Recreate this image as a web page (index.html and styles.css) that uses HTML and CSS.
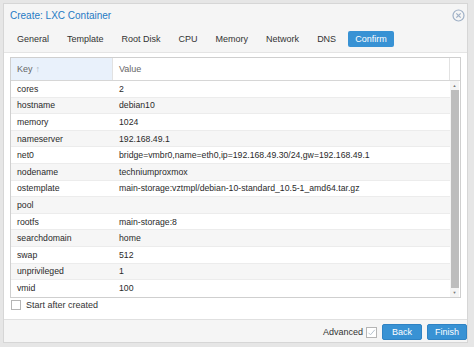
FILE: index.html
```html
<!DOCTYPE html>
<html lang="en">
<head>
    <meta charset="UTF-8">
    <title>Create: LXC Container</title>
    <link rel="stylesheet" href="styles.css">
</head>
<body>

<div class="window">
    <div class="window-header">
        <span class="title">Create: LXC Container</span>
        <svg class="close" width="13" height="13" viewBox="0 0 13 13">
            <circle cx="6.5" cy="6.5" r="5.5" fill="none" stroke="#9fb0c6" stroke-width="1.2"/>
            <path d="M4.3 4.3 L8.7 8.7 M8.7 4.3 L4.3 8.7" stroke="#9fb0c6" stroke-width="1.2"/>
        </svg>
    </div>

    <div class="tabs">
        <span class="tab">General</span>
        <span class="tab">Template</span>
        <span class="tab">Root Disk</span>
        <span class="tab">CPU</span>
        <span class="tab">Memory</span>
        <span class="tab">Network</span>
        <span class="tab">DNS</span>
        <span class="tab active">Confirm</span>
    </div>

    <div class="panel">
        <div class="grid">
            <div class="grid-head">
                <div class="col-key sorted">Key <span class="arrow">&#8593;</span></div>
                <div class="col-value">Value</div>
                <div class="col-scroll"></div>
            </div>
            <div class="grid-body">
                <div class="rows"></div>
                <div class="scrollbar">
                    <span class="scroll-arrow">&#9650;</span>
                    <div class="thumb"></div>
                    <span class="scroll-arrow">&#9660;</span>
                </div>
            </div>
        </div>

        <label class="start-check">
            <span class="box"></span>
            Start after created
        </label>
    </div>

    <div class="footer">
        <span class="advanced">Advanced</span>
        <svg class="adv-box" width="11" height="11" viewBox="0 0 11 11">
            <rect x="0.5" y="0.5" width="10" height="10" fill="#fff" stroke="#b5b5b5"/>
            <path d="M2.5 5.8 L4.5 7.8 L8.8 2.8" fill="none" stroke="#b8c4d0" stroke-width="1"/>
        </svg>
        <button class="btn">Back</button>
        <button class="btn">Finish</button>
    </div>
</div>

<script>
const data = [
    ['cores', '2'],
    ['hostname', 'debian10'],
    ['memory', '1024'],
    ['nameserver', '192.168.49.1'],
    ['net0', 'bridge=vmbr0,name=eth0,ip=192.168.49.30/24,gw=192.168.49.1'],
    ['nodename', 'techniumproxmox'],
    ['ostemplate', 'main-storage:vztmpl/debian-10-standard_10.5-1_amd64.tar.gz'],
    ['pool', ''],
    ['rootfs', 'main-storage:8'],
    ['searchdomain', 'home'],
    ['swap', '512'],
    ['unprivileged', '1'],
    ['vmid', '100']
];

const rows = document.querySelector('.rows');

// Build the key/value rows
data.forEach(([key, value]) => {
    const row = document.createElement('div');
    row.classList.add('row');
    row.innerHTML = `
        <div class="col-key">${key}</div>
        <div class="col-value">${value}</div>
    `;
    rows.appendChild(row);
});
</script>

</body>
</html>
```

FILE: styles.css
```css
* {
    margin: 0;
    padding: 0;
    box-sizing: border-box;
}

body {
    font-family: 'Liberation Sans', Arial, sans-serif;
    font-size: 9px;
    color: #222;
    background: #e6e6e6;
    width: 474px;
    height: 347px;
    overflow: hidden;
}

.window {
    margin: 3px 0 0 3px;
    width: 465px;
    height: 340px;
    background: #f5f5f5;
    border: 1px solid #d6d6d6;
    display: flex;
    flex-direction: column;
}

.window-header {
    height: 22px;
    display: flex;
    align-items: center;
    justify-content: space-between;
    padding: 0 2px 0 6px;
}

.title {
    color: #1f7ac4;
    font-size: 10px;
}

.close {
    margin-top: 1px;
}

.tabs {
    height: 26px;
    display: flex;
    align-items: center;
    padding-left: 6px;
}

.tab {
    padding: 3px 7px;
    margin-right: 4px;
    color: #333;
    border-radius: 2px;
}

.tab.active {
    background: #3892d4;
    color: #fff;
    padding: 3px 7px;
    margin-left: 1px;
}

.panel {
    flex: 1;
    background: #fff;
    padding: 4px 6px 0 6px;
    border-top: 1px solid #e4e4e4;
    border-bottom: 1px solid #e0e0e0;
}

.grid {
    border: 1px solid #cfcfcf;
    width: 451px;
}

.grid-head {
    display: flex;
    height: 23px;
    border-bottom: 1px solid #d6d6d6;
    color: #666;
}

.grid-head > div {
    display: flex;
    align-items: center;
    padding-left: 6px;
    border-right: 1px solid #e2e2e2;
}

.grid-head .col-key {
    width: 102px;
}

.grid-head .col-value {
    flex: 1;
}

.grid-head .col-scroll {
    width: 10px;
    padding: 0;
    border-right: none;
}

.sorted {
    background: #e9f1fb;
}

.arrow {
    color: #a8b4c2;
    margin-left: 3px;
}

.grid-body {
    display: flex;
    font-size: 8.7px;
    color: #2a2a2a;
}

.rows {
    flex: 1;
}

.row {
    display: flex;
    height: 16.6px;
    align-items: center;
    border-bottom: 1px solid #ececec;
}

.row:nth-child(even) {
    background: #f6f6f6;
}

.row:last-child {
    border-bottom: none;
}

.row .col-key {
    width: 102px;
    padding-left: 6px;
}

.row .col-value {
    flex: 1;
    padding-left: 6px;
    white-space: nowrap;
}

.scrollbar {
    width: 9px;
    background: #f4f4f4;
    display: flex;
    flex-direction: column;
    align-items: center;
    margin-right: 1px;
}

.scroll-arrow {
    font-size: 4px;
    color: #777;
    height: 9px;
    line-height: 9px;
}

.thumb {
    flex: 1;
    width: 8px;
    background: #bdbdbd;
}

.start-check {
    display: flex;
    align-items: center;
    margin-top: 2px;
    margin-left: 1px;
    color: #333;
}

.box {
    width: 10px;
    height: 10px;
    border: 1px solid #b5b5b5;
    background: #fff;
    margin-right: 5px;
}

.footer {
    height: 22px;
    display: flex;
    align-items: center;
    justify-content: flex-end;
    padding-top: 2px;
}

.advanced {
    color: #333;
    margin-right: 3px;
}

.btn {
    font-family: 'Liberation Sans', Arial, sans-serif;
    font-size: 9px;
    color: #fff;
    background: #3892d4;
    border: 1px solid #2f83c4;
    border-radius: 2px;
    width: 40px;
    height: 16px;
    margin-left: 5px;
}
```
